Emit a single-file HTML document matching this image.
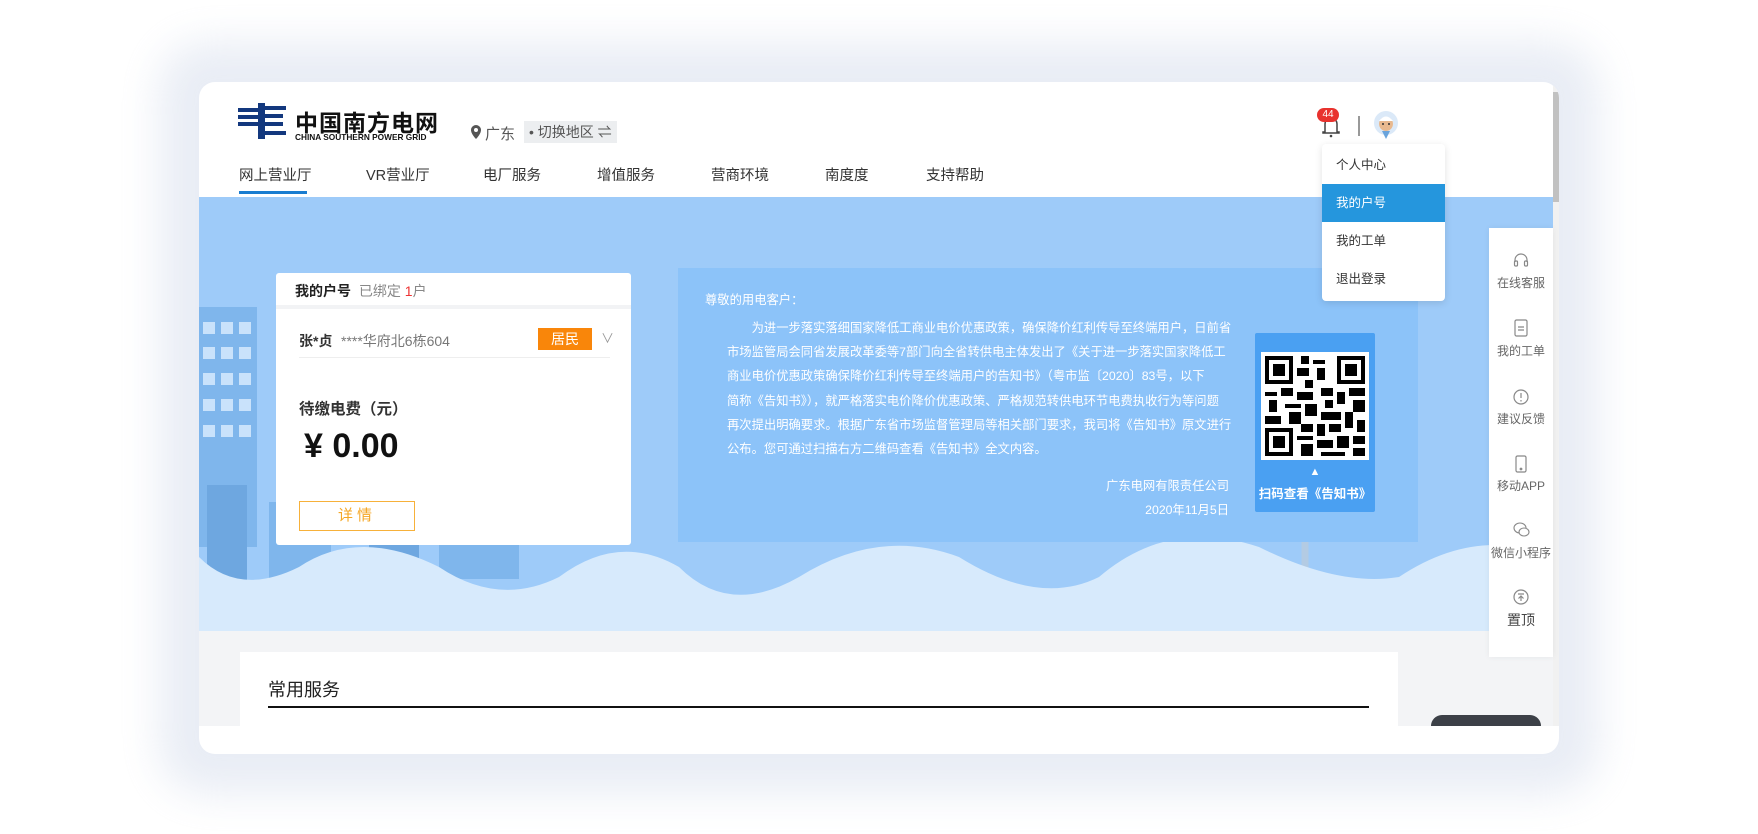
<!DOCTYPE html>
<html><head><meta charset="utf-8"><style>
*{margin:0;padding:0;box-sizing:border-box}
body{width:1758px;height:834px;background:#fff;position:relative;overflow:hidden;font-family:"Liberation Sans","Noto Sans CJK SC",sans-serif;color:#333}
.abs{position:absolute}
.card{left:199px;top:82px;width:1360px;height:672px;background:#fff;border-radius:16px;box-shadow:0 0 40px 40px rgba(218,225,238,.6);overflow:hidden}
.nav span{position:absolute;top:82px;font-size:14.5px;color:#333;white-space:nowrap}
.banner{left:0;top:115px;width:1354px;height:434px;background:#9ecbf9;overflow:hidden}
.side div{position:absolute;left:0;width:64px;text-align:center;font-size:12px;color:#666}
.dd div{height:38px;line-height:38px;padding-left:14px;font-size:12.5px;color:#333}
.notice p{font-size:12.3px;color:#fff;line-height:24.2px;white-space:nowrap}
</style></head><body>
<div class="abs card">
  <svg class="abs" style="left:39px;top:21px" width="48" height="36" viewBox="0 0 48 36">
    <rect x="20" y="0" width="7" height="36" fill="#13387e"/>
    <path d="M0 7h20M0 14h20M0 21h20" stroke="#13387e" stroke-width="4"/>
    <path d="M27 5h21M27 13h18M27 21h18M27 30h21" stroke="#13387e" stroke-width="4"/>
  </svg>
  <div class="abs" style="left:96px;top:22px;font-size:23px;font-weight:bold;color:#111;letter-spacing:1px">中国南方电网</div>
  <div class="abs" style="left:96px;top:50px;font-size:8.3px;font-weight:bold;color:#111">CHINA SOUTHERN POWER GRID</div>
  <svg class="abs" style="left:272px;top:43px" width="10" height="14" viewBox="0 0 10 14"><path d="M5 0a5 5 0 0 1 5 5c0 4-5 9-5 9S0 9 0 5a5 5 0 0 1 5-5z" fill="#555"/><circle cx="5" cy="5" r="2" fill="#fff"/></svg>
  <div class="abs" style="left:286px;top:41px;font-size:15px;color:#555">广东</div>
  <div class="abs" style="left:325px;top:39px;height:22px;padding:0 5px;background:#eceef0;font-size:14px;color:#555;line-height:22px">• 切换地区 ⇌</div>
  <div class="nav">
    <span style="left:40px">网上营业厅</span><span style="left:167px">VR营业厅</span><span style="left:284px">电厂服务</span><span style="left:398px">增值服务</span><span style="left:512px">营商环境</span><span style="left:626px">南度度</span><span style="left:727px">支持帮助</span>
  </div>
  <div class="abs" style="left:40px;top:109px;width:68px;height:3px;background:#1a7dd0"></div>
  <svg class="abs" style="left:1122px;top:32px" width="20" height="24" viewBox="0 0 20 24"><path d="M4 18V10a6 6 0 0 1 12 0v8h2v1H2v-1z" fill="none" stroke="#444" stroke-width="1.5"/><circle cx="10" cy="22" r="1.3" fill="#444"/></svg>
  <div class="abs" style="left:1118px;top:26px;width:22px;height:14px;border-radius:7px;background:#e8322e;color:#fff;font-size:10px;text-align:center;line-height:14px">44</div>
  <div class="abs" style="left:1159px;top:34px;width:2px;height:20px;background:#999"></div>
  <svg class="abs" style="left:1173px;top:28px" width="28" height="30" viewBox="0 0 28 30"><circle cx="14" cy="13" r="12" fill="#dbe9f8"/><circle cx="14" cy="14" r="7" fill="#e8b98f"/><path d="M7 11q7-9 14 0" fill="#fff"/><circle cx="11" cy="14" r="1" fill="#333"/><circle cx="17" cy="14" r="1" fill="#333"/><path d="M10 21l4 8 4-8z" fill="#6aa4dc"/></svg>
  <div class="abs banner">
    <svg class="abs" style="left:0;top:0" width="1354" height="434">
      <g fill="#7fb6ec"><rect x="0" y="110" width="58" height="240"/><rect x="8" y="288" width="40" height="120" fill="#6ea7e0"/><rect x="70" y="305" width="62" height="80"/><rect x="170" y="305" width="50" height="90" fill="#6ea7e0"/><rect x="240" y="322" width="80" height="60"/></g>
      <g fill="#c9e2fb"><rect x="4" y="125" width="12" height="12"/><rect x="22" y="125" width="12" height="12"/><rect x="40" y="125" width="12" height="12"/><rect x="4" y="150" width="12" height="12"/><rect x="22" y="150" width="12" height="12"/><rect x="40" y="150" width="12" height="12"/><rect x="4" y="176" width="12" height="12"/><rect x="22" y="176" width="12" height="12"/><rect x="40" y="176" width="12" height="12"/><rect x="4" y="202" width="12" height="12"/><rect x="22" y="202" width="12" height="12"/><rect x="40" y="202" width="12" height="12"/><rect x="4" y="228" width="12" height="12"/><rect x="22" y="228" width="12" height="12"/><rect x="40" y="228" width="12" height="12"/></g>
      <g stroke="#b3cbe3" stroke-width="7" fill="none"><path d="M1106 170v260"/><path d="M1106 170l-60 40M1106 170l60 30M1106 170l5-80"/></g>
      <path d="M0 360q40 40 100 10q60-40 140 0q60 40 120 10q60-45 120-10q50 50 120 10q80-50 160-20q80 50 140 20q70-60 160-30q80 40 140 30q60-40 120-30q40 10 60 40q40-60 120-30v74H0z" fill="#d7eafc"/>
    </svg>
    <div class="abs" style="left:77px;top:76px;width:355px;height:272px;background:#fff;border-radius:3px">
      <div style="height:36px;border-bottom:4px solid #f2f3f5;padding:8px 0 0 19px;font-size:14px"><b style="color:#222">我的户号</b> <span style="color:#888;margin-left:4px">已绑定 <span style="color:#e33">1</span>户</span></div>
      <div class="abs" style="left:23px;top:58px;font-size:14px;font-weight:bold;color:#333">张*贞</div>
      <div class="abs" style="left:65px;top:58px;font-size:14px;color:#777">****华府北6栋604</div>
      <div class="abs" style="left:262px;top:55px;width:54px;height:22px;background:#f9860a;color:#fff;font-size:14px;text-align:center;line-height:22px">居民</div>
      <div class="abs" style="left:325px;top:55px;font-size:13px;color:#999">∨</div>
      <div class="abs" style="left:23px;top:84px;width:311px;height:1px;background:#eee"></div>
      <div class="abs" style="left:23px;top:124px;font-size:15.5px;font-weight:bold;color:#333">待缴电费（元）</div>
      <div class="abs" style="left:28px;top:154px;font-size:34px;font-weight:bold;color:#111">¥ 0.00</div>
      <div class="abs" style="left:23px;top:228px;width:116px;height:30px;border:1.5px solid #f7b13a;color:#f5a623;font-size:15px;text-align:center;line-height:27px;letter-spacing:4px">详情</div>
    </div>
    <div class="abs notice" style="left:479px;top:71px;width:740px;height:274px;background:#8cc3f9">
      <p class="abs" style="left:27px;top:20px">尊敬的用电客户：</p>
      <p class="abs" style="left:49px;top:48px">　　为进一步落实落细国家降低工商业电价优惠政策，确保降价红利传导至终端用户，日前省<br>市场监管局会同省发展改革委等7部门向全省转供电主体发出了《关于进一步落实国家降低工<br>商业电价优惠政策确保降价红利传导至终端用户的告知书》（粤市监〔2020〕83号，以下<br>简称《告知书》），就严格落实电价降价优惠政策、严格规范转供电环节电费执收行为等问题<br>再次提出明确要求。根据广东省市场监督管理局等相关部门要求，我司将《告知书》原文进行<br>公布。您可通过扫描右方二维码查看《告知书》全文内容。</p>
      <p class="abs" style="left:300px;top:206px;width:251px;text-align:right">广东电网有限责任公司<br>2020年11月5日</p>
      <div class="abs" style="left:577px;top:65px;width:120px;height:179px;background:#4aa0f2;border-radius:2px">
        <svg class="abs" style="left:6px;top:18px" width="108" height="110" viewBox="0 0 27 27"><rect width="27" height="27" fill="#fff"/><g fill="#000">
          <path d="M1 1h7v7H1zM19 1h7v7h-7zM1 19h7v7H1z"/></g><g fill="#fff"><path d="M2 2h5v5H2zM20 2h5v5h-5zM2 20h5v5H2z"/></g><g fill="#000"><path d="M3 3h3v3H3zM21 3h3v3h-3zM3 21h3v3H3z"/>
          <path d="M10 1h2v2h-2zM13 2h3v1h-3zM9 4h3v2H9zM14 4h2v3h-2zM11 7h2v2h-2zM1 10h3v1H1zM5 9h3v2H5zM9 10h4v2H9zM15 9h3v2h-3zM19 10h2v3h-2zM22 9h4v2h-4zM2 12h2v3H2zM6 13h4v1H6zM11 13h3v3h-3zM16 12h2v2h-2zM23 12h3v3h-3zM1 16h4v2H1zM7 15h3v3H7zM15 15h5v2h-5zM21 15h2v4h-2zM10 18h3v2h-3zM14 18h2v3h-2zM17 18h3v2h-3zM24 17h2v3h-2zM9 21h4v1H9zM10 23h3v3h-3zM14 22h4v2h-4zM19 21h3v3h-3zM23 21h3v2h-3zM15 25h6v1h-6zM23 24h3v2h-3z"/></g></svg>
        <div class="abs" style="left:0;top:133px;width:120px;text-align:center;color:#fff;font-size:11px">▲</div>
        <div class="abs" style="left:0;top:150px;width:120px;text-align:center;color:#fff;font-size:12.5px;font-weight:bold">扫码查看《告知书》</div>
      </div>
    </div>
  </div>
  <div class="abs" style="left:0;top:549px;width:1354px;height:95px;background:#f3f4f6"></div>
  <div class="abs" style="left:41px;top:570px;width:1158px;height:74px;background:#fff"></div>
  <div class="abs" style="left:69px;top:594px;font-size:18px;color:#222">常用服务</div>
  <div class="abs" style="left:69px;top:624px;width:1101px;height:2px;background:#111"></div>
  <div class="abs" style="left:1232px;top:633px;width:110px;height:11px;border-radius:20px 20px 0 0;background:#3c4047"></div>
  <div class="abs" style="left:1354px;top:0;width:6px;height:644px;background:#f1f1f1"></div>
  <div class="abs" style="left:1354px;top:10px;width:6px;height:110px;background:#c1c1c1"></div>
  <div class="abs dd" style="left:1123px;top:62px;width:123px;height:157px;background:#fff;border-radius:4px;box-shadow:0 2px 8px rgba(0,0,0,.12);overflow:hidden;padding-top:2px">
    <div>个人中心</div><div style="background:#2596dd;color:#fff">我的户号</div><div>我的工单</div><div>退出登录</div>
  </div>
  <div class="abs side" style="left:1290px;top:146px;width:64px;height:429px;background:#fff;box-shadow:0 0 6px rgba(0,0,0,.06)">
    <svg class="abs" style="left:24px;top:24px" width="16" height="16" viewBox="0 0 16 16" fill="none" stroke="#888" stroke-width="1.2"><path d="M2 10V8a6 6 0 0 1 12 0v2"/><rect x="1.5" y="9" width="3" height="5" rx="1"/><rect x="11.5" y="9" width="3" height="5" rx="1"/></svg>
    <div style="top:46px">在线客服</div>
    <svg class="abs" style="left:25px;top:91px" width="14" height="18" viewBox="0 0 14 18" fill="none" stroke="#888" stroke-width="1.2"><rect x="1" y="1" width="12" height="16" rx="1.5"/><path d="M4 8h6M4 11h6"/></svg>
    <div style="top:114px">我的工单</div>
    <svg class="abs" style="left:24px;top:161px" width="16" height="16" viewBox="0 0 16 16" fill="none" stroke="#888" stroke-width="1.2"><circle cx="8" cy="8" r="7"/><path d="M8 4v5M8 11v1.5"/></svg>
    <div style="top:182px">建议反馈</div>
    <svg class="abs" style="left:26px;top:227px" width="12" height="18" viewBox="0 0 12 18" fill="none" stroke="#888" stroke-width="1.2"><rect x="1" y="1" width="10" height="16" rx="1.5"/><circle cx="6" cy="14" r=".8"/></svg>
    <div style="top:249px">移动APP</div>
    <svg class="abs" style="left:24px;top:294px" width="17" height="16" viewBox="0 0 17 16" fill="none" stroke="#888" stroke-width="1.1"><ellipse cx="7" cy="6" rx="6" ry="5"/><ellipse cx="11" cy="10" rx="5" ry="4" fill="#fff"/></svg>
    <div style="top:316px;left:-2px;width:68px">微信小程序</div>
    <svg class="abs" style="left:24px;top:361px" width="16" height="16" viewBox="0 0 16 16" fill="none" stroke="#888" stroke-width="1.2"><circle cx="8" cy="8" r="7"/><path d="M5 5h6M8 12V7M5.5 9.5L8 7l2.5 2.5"/></svg>
    <div style="top:382px;font-size:14px;color:#444">置顶</div>
  </div>
</div>
</body></html>
